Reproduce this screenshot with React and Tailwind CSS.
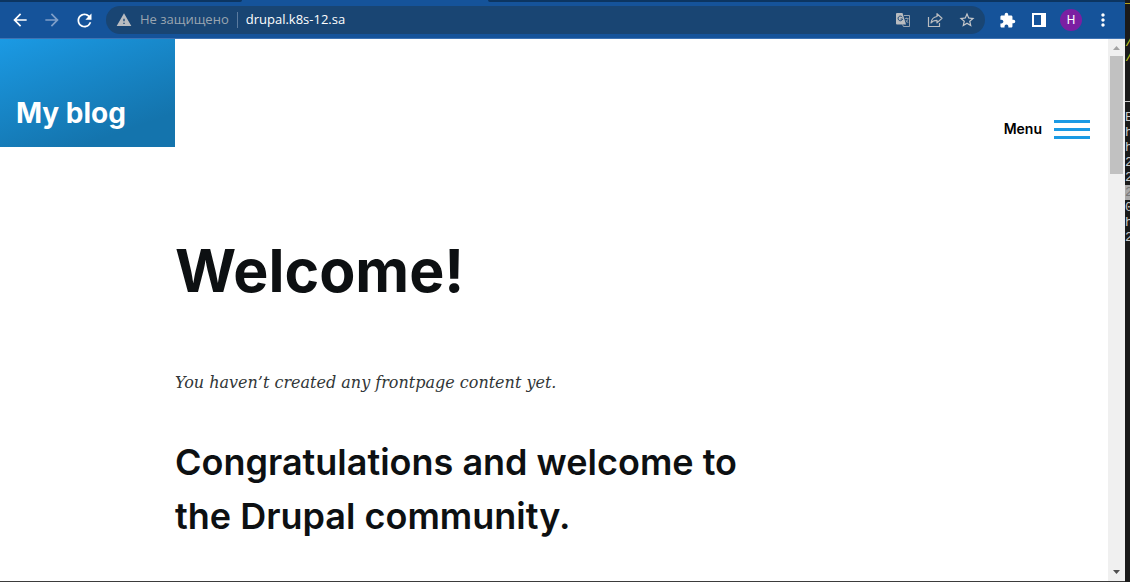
import { MdArrowBack, MdArrowForward, MdExtension, MdMoreVert, MdRefresh, MdStarBorder, MdWarning } from "react-icons/md";

function IconButton({ label, className = "text-white", children }) {
  return (
    <button type="button" aria-label={label} className={`flex h-7 w-8 shrink-0 items-center justify-center ${className}`}>
      {children}
    </button>
  );
}

function TranslateIcon() {
  return (
    <svg width="16" height="16" viewBox="0 0 16 16" fill="none">
      <path d="M2 1h5.500l3.500 11.500H2a1 1 0 0 1-1-1V2a1 1 0 0 1 1-1z" fill="currentColor" />
      <path d="M7.300 5.200A2.300 2.300 0 1 0 7.600 7H5.500" stroke="#194573" />
      <path d="M9 3.500h5.500v11H8.500L7.500 12.500" stroke="currentColor" strokeOpacity=".8" />
      <path d="M10 6.500h3.500M11.700 5.500v1M13 6.500c-.4 2-1.200 3.200-2.200 4M10.800 8l2.400 3" stroke="currentColor" strokeOpacity=".7" strokeWidth=".9" />
    </svg>
  );
}

function ShareIcon() {
  return (
    <svg width="16" height="16" viewBox="0 0 16 16" fill="none" stroke="currentColor" strokeWidth="1.200">
      <path d="M1.500 5v9.500h11V11" />
      <path d="M10 1.700l5 4.600-5 4.600V8.400c-2.800 0-4.700.8-6 2.600.4-3.400 2.500-6 6-6.500z" strokeLinejoin="round" />
    </svg>
  );
}

function SidePanelIcon() {
  return (
    <svg width="14" height="14" viewBox="0 0 14 14">
      <path d="M0 0h14v14H0zM2 2v10h7V2z" fill="currentColor" fillRule="evenodd" />
    </svg>
  );
}

function Toolbar() {
  return (
    <header className="shrink-0 border-b border-[#3f73b3] bg-[#15539a]">
      <div className="flex h-[2px] justify-between">
        <span className="w-[242px] rounded-br-sm bg-[#0c3561]" />
        <span className="w-[246px]" />
        <span className="grow rounded-bl-sm bg-[#0c3561]" />
      </div>
      <div className="flex h-9 items-center pr-[6px] pl-1">
        <IconButton label="Back"><MdArrowBack size={20} /></IconButton>
        <IconButton label="Forward" className="text-[#7f9fc9]"><MdArrowForward size={20} /></IconButton>
        <IconButton label="Reload"><MdRefresh size={21} /></IconButton>
        <div className="mx-[6px] flex h-7 min-w-0 grow items-center rounded-full bg-[#194573] pr-[2px] pl-[10px] font-['Open_Sans','Noto_Sans',sans-serif] text-[13px]">
          <MdWarning size={16} className="shrink-0 text-[#b9bcc0]" />
          <label htmlFor="address" className="ml-2 shrink-0 text-[#9aa5b1]">Не защищено</label>
          <span className="mx-2 h-4 w-px shrink-0 bg-[#5b7b9f]" />
          <input id="address" type="text" defaultValue="drupal.k8s-12.sa" className="min-w-0 grow bg-transparent text-white outline-none" />
          <IconButton label="Translate" className="text-[#b9bcc0]"><TranslateIcon /></IconButton>
          <IconButton label="Share" className="text-[#b9bcc0]"><ShareIcon /></IconButton>
          <IconButton label="Bookmark" className="text-[#c6c8cb]"><MdStarBorder size={18} /></IconButton>
        </div>
        <IconButton label="Extensions"><MdExtension size={17} /></IconButton>
        <IconButton label="Side panel"><SidePanelIcon /></IconButton>
        <IconButton label="Profile">
          <span className="flex size-[22px] items-center justify-center rounded-full bg-[#7b1fa2] font-[Roboto,sans-serif] text-xs">H</span>
        </IconButton>
        <IconButton label="Browser menu"><MdMoreVert size={20} /></IconButton>
      </div>
    </header>
  );
}

function ScrollBar() {
  return (
    <div className="flex w-[17px] shrink-0 flex-col items-center bg-[#f0f0f0]">
      <svg width="17" height="17" viewBox="0 0 17 17"><path d="M5 11l3.500-4 3.500 4z" fill="#a3a3a3" /></svg>
      <div className="h-[118px] w-[13px] bg-[#c1c1c1]" />
      <svg className="mt-auto" width="17" height="17" viewBox="0 0 17 17"><path d="M5 6l3.500 4 3.500-4z" fill="#505050" /></svg>
    </div>
  );
}

function Site() {
  return (
    <div className="min-w-0 grow overflow-hidden bg-white font-[Inter,sans-serif] text-[#0d1012]">
      <div className="flex h-[108px] items-end justify-between">
        <a href="#home" className="flex h-full w-[175px] items-end bg-linear-160 from-[#1b9ae4] to-[#1474ad] to-80% px-4 pb-4 text-[28px] leading-9 font-bold text-white">
          My blog
        </a>
        <button type="button" className="mr-[18px] mb-2 flex items-center gap-3 text-sm font-semibold text-black">
          Menu
          <span className="flex w-9 flex-col gap-[5px]">
            <span className="h-[3px] bg-[#1b9ae4]" />
            <span className="h-[3px] bg-[#1b9ae4]" />
            <span className="h-[3px] bg-[#1b9ae4]" />
          </span>
        </button>
      </div>
      <main className="ml-[175px] max-w-[600px]">
        <h1 className="mt-[88px] text-[59px] leading-[72px] font-bold">Welcome!</h1>
        <p className="mt-[61px] font-['DejaVu_Serif',serif] text-[16px] leading-[30px] text-[#313637] italic">
          You haven’t created any frontpage content yet.
        </p>
        <h2 className="mt-[37px] text-[36px] leading-[54px] font-semibold">Congratulations and welcome to the Drupal community.</h2>
      </main>
    </div>
  );
}

const terminalLines = ["E", "h", "h", "2", "2", "2", "0", "h", "2"];

function Terminal() {
  return (
    <aside className="w-[5px] shrink-0 overflow-hidden bg-[#1a1a1a] font-['Liberation_Mono',monospace] text-[13px] leading-[15px] text-[#cccccc]">
      <div className="mt-[3px] h-px bg-[#b5a21c]" />
      <div className="mt-[31px] text-[#c5c81e]"><p>/</p><p>/</p></div>
      <div className="mt-[36px] mb-2 h-px bg-[#cccccc]" />
      {terminalLines.map((line, index) => (
        <p key={index} className={index === 5 ? "bg-[#a9a9a9] text-[#777777]" : ""}>{line}</p>
      ))}
    </aside>
  );
}

export default function App() {
  return (
    <div className="flex h-screen overflow-hidden bg-[#1a1a1a]">
      <div className="flex min-w-0 grow flex-col border-b border-[#3b3b3b]">
        <Toolbar />
        <div className="flex min-h-0 grow">
          <Site />
          <ScrollBar />
        </div>
      </div>
      <Terminal />
    </div>
  );
}
